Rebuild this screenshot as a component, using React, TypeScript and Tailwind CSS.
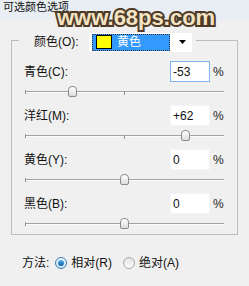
import React from "react";

const FONT = '"Liberation Sans", "Noto Sans CJK SC", sans-serif';

function Slider({ value }: { value: number }) {
  const pos = ((value + 100) / 200) * 198;
  return (
    <div className="relative ml-[13px] h-[19px] w-[199px]">
      <div className="absolute left-0 right-0 top-[9px] h-px bg-[#a3a3a3]" />
      <div className="absolute left-0 right-0 top-[10px] h-px bg-[#fbfbfb]" />
      <div className="absolute left-0 top-[8px] h-[4px] w-px bg-[#8f8f8f]" />
      <div className="absolute left-[99px] top-[9px] h-[4px] w-px bg-[#8f8f8f]" />
      <div
        className="absolute top-[4px] h-[11px] w-[9px] rounded-t-[4px] rounded-b-[2px] border border-[#8c8c8c] bg-gradient-to-b from-[#ffffff] to-[#dcdcdc]"
        style={{ left: Math.round(pos) - 4 }}
      />
    </div>
  );
}

function Row({
  label,
  value,
  num,
  focused,
}: {
  label: string;
  value: string;
  num: number;
  focused?: boolean;
}) {
  return (
    <div className="flex flex-col">
      <div className="flex h-[21px] items-center">
        <div className="ml-[12px] w-[146px] text-[12px] leading-[14px] text-[#111]">{label}</div>
        <div
          className={`flex h-[21px] w-[40px] items-center bg-white pl-[2px] text-[12px] text-[#111] border ${
            focused ? "border-[#7eb4ea]" : "border-[#f4f4f4]"
          }`}
        >
          {value}
        </div>
        <div className="ml-[3px] text-[12px] leading-[14px] text-[#222]">%</div>
      </div>
      <Slider value={num} />
    </div>
  );
}

function Radio({ checked }: { checked?: boolean }) {
  return checked ? (
    <div className="flex h-[12px] w-[12px] items-center justify-center rounded-full border border-[#3c7fb1] bg-gradient-to-b from-[#eef6fc] to-[#cfe3f3]">
      <div className="h-[6px] w-[6px] rounded-full bg-gradient-to-b from-[#53b4f2] to-[#0c5ea6]" />
    </div>
  ) : (
    <div className="h-[12px] w-[12px] rounded-full border border-[#a9a9a9] bg-gradient-to-b from-[#e6e6e6] to-[#fbfbfb]" />
  );
}

export default function App() {
  return (
    <div className="relative h-[286px] w-[249px] overflow-hidden bg-[#f0f0f0]" style={{ fontFamily: FONT }}>
      <div className="h-[20px] bg-[#e9eef4] pl-[3px] pt-[1px] text-[11px] leading-[13px] text-[#111]">
        可选颜色选项
      </div>

      <fieldset className="ml-[11px] mt-[13px] h-[202px] w-[227px] border border-[#bdbdbd]">
        <legend className="ml-[7px] h-[14px] pl-[15px] pr-[4px]">
          <div className="flex h-[18px] items-center">
            <div className="w-[55px] text-[12px] leading-[14px] text-[#111]">颜色(O):</div>
            <div className="flex h-[19px] w-[103px] items-center bg-white pl-[3px]">
              <div className="flex h-[17px] w-[78px] items-center border border-dotted border-[#333] bg-[#3399ff] pl-[3px]">
                <div className="h-[14px] w-[16px] border border-black bg-[#ffff00]" />
                <div className="ml-[5px] text-[12px] leading-[14px] text-white">黄色</div>
              </div>
              <svg width="7" height="4" viewBox="0 0 7 4" className="ml-[9px]">
                <path d="M0 0 H7 L3.5 4 Z" fill="#000" />
              </svg>
            </div>
          </div>
        </legend>
        <div className="flex flex-col gap-[4px] pt-[14px]">
          <Row label="青色(C):" value="-53" num={-53} focused />
          <Row label="洋红(M):" value="+62" num={62} />
          <Row label="黄色(Y):" value="0" num={0} />
          <Row label="黑色(B):" value="0" num={0} />
        </div>
      </fieldset>

      <div className="mt-[21px] flex h-[14px] items-center text-[12px] leading-[14px] text-[#111]">
        <div className="ml-[22px]">方法:</div>
        <div className="ml-[6px]">
          <Radio checked />
        </div>
        <div className="ml-[4px]">相对(R)</div>
        <div className="ml-[11px]">
          <Radio />
        </div>
        <div className="ml-[4px]">绝对(A)</div>
      </div>

      <div
        className="pointer-events-none absolute left-[57px] top-[5px] text-[22px] font-bold leading-[25px] text-[#f4e4c4] [-webkit-text-stroke:4px_#4d3b28] [paint-order:stroke_fill]"
        style={{ fontFamily: '"Liberation Sans", sans-serif' }}
      >
        www.68ps.com
      </div>
    </div>
  );
}
